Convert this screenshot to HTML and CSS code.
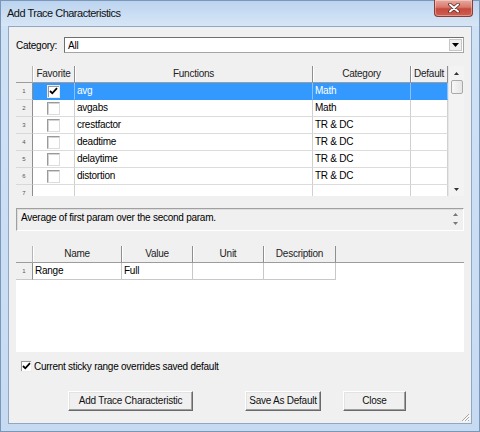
FILE: index.html
```html
<!DOCTYPE html>
<html>
<head>
<meta charset="utf-8">
<link rel="stylesheet" href="styles.css">
</head>
<body>
<div class="window">
  <div class="titlebar">
    <span class="title">Add Trace Characteristics</span>
    <div class="close-btn">
      <svg width="14" height="10" viewBox="0 0 14 10">
        <path d="M3 1.5 L11 8.5 M11 1.5 L3 8.5" stroke="#5a2a26" stroke-width="3.6" stroke-linecap="round"/>
        <path d="M3 1.5 L11 8.5 M11 1.5 L3 8.5" stroke="#ffffff" stroke-width="2" stroke-linecap="round"/>
      </svg>
    </div>
  </div>
  <div class="client">
    <div class="cat-row">
      <span class="cat-label">Category:</span>
      <div class="combo">
        <span class="combo-text">All</span>
        <div class="combo-drop">
          <svg width="7" height="4" viewBox="0 0 7 4"><path d="M0 0 H7 L3.5 4 Z" fill="#000"/></svg>
        </div>
      </div>
    </div>

    <div class="grid1">
      <div class="g1-table">
        <div class="hc rh"></div>
        <div class="hc">Favorite</div>
        <div class="hc">Functions</div>
        <div class="hc">Category</div>
        <div class="hc">Default</div>

        <div class="rhc">1</div>
        <div class="c sel cb-cell"><span class="cb checked"><svg width="9" height="8" viewBox="0 0 9 8"><path d="M1 4 L3.3 6.3 L8 1.2" stroke="#000" stroke-width="1.8" fill="none"/></svg></span></div>
        <div class="c sel">avg</div>
        <div class="c sel">Math</div>
        <div class="c sel"></div>

        <div class="rhc">2</div>
        <div class="c cb-cell"><span class="cb"></span></div>
        <div class="c">avgabs</div>
        <div class="c">Math</div>
        <div class="c"></div>

        <div class="rhc">3</div>
        <div class="c cb-cell"><span class="cb"></span></div>
        <div class="c">crestfactor</div>
        <div class="c">TR &amp; DC</div>
        <div class="c"></div>

        <div class="rhc">4</div>
        <div class="c cb-cell"><span class="cb"></span></div>
        <div class="c">deadtime</div>
        <div class="c">TR &amp; DC</div>
        <div class="c"></div>

        <div class="rhc">5</div>
        <div class="c cb-cell"><span class="cb"></span></div>
        <div class="c">delaytime</div>
        <div class="c">TR &amp; DC</div>
        <div class="c"></div>

        <div class="rhc">6</div>
        <div class="c cb-cell"><span class="cb"></span></div>
        <div class="c">distortion</div>
        <div class="c">TR &amp; DC</div>
        <div class="c"></div>

        <div class="rhc">7</div>
        <div class="c"></div>
        <div class="c"></div>
        <div class="c"></div>
        <div class="c"></div>
      </div>
      <div class="vscroll">
        <svg class="arr" width="5" height="3" viewBox="0 0 5 3"><path d="M0 3 H5 L2.5 0 Z" fill="#333"/></svg>
        <div class="thumb"></div>
        <div class="track"></div>
        <svg class="arr" width="5" height="3" viewBox="0 0 5 3"><path d="M0 0 H5 L2.5 3 Z" fill="#333"/></svg>
      </div>
    </div>

    <div class="desc">
      <span class="desc-text">Average of first param over the second param.</span>
      <div class="desc-scroll">
        <svg width="5" height="3" viewBox="0 0 5 3"><path d="M0 3 H5 L2.5 0 Z" fill="#777"/></svg>
        <svg width="5" height="3" viewBox="0 0 5 3"><path d="M0 0 H5 L2.5 3 Z" fill="#777"/></svg>
      </div>
    </div>

    <div class="grid2">
      <div class="g2-head">
        <div class="hc rh"></div>
        <div class="hc w-name">Name</div>
        <div class="hc w-val">Value</div>
        <div class="hc w-unit">Unit</div>
        <div class="hc w-desc">Description</div>
        <div class="hc fill"></div>
      </div>
      <div class="g2-row">
        <div class="rhc">1</div>
        <div class="c w-name">Range</div>
        <div class="c w-val">Full</div>
        <div class="c w-unit"></div>
        <div class="c w-desc"></div>
      </div>
    </div>

    <div class="sticky">
      <span class="cb small checked"><svg width="9" height="8" viewBox="0 0 9 8"><path d="M1 4 L3.3 6.3 L8 1.2" stroke="#000" stroke-width="1.8" fill="none"/></svg></span>
      <span class="sticky-text">Current sticky range overrides saved default</span>
    </div>

    <div class="buttons">
      <div class="btn b-add">Add Trace Characteristic</div>
      <div class="btn b-save">Save As Default</div>
      <div class="btn b-close">Close</div>
    </div>

    <svg class="grip" width="10" height="10" viewBox="0 0 10 10">
      <path d="M9 2 L2 9 M9 5 L5 9 M9 8 L8 9" stroke="#a9a9a9" stroke-width="1"/>
      <path d="M10 3 L3 10 M10 6 L6 10" stroke="#ffffff" stroke-width="1"/>
    </svg>
  </div>
</div>
</body>
</html>
```

FILE: styles.css
```css
html, body {
  margin: 0;
  padding: 0;
  background: #ffffff;
}

body {
  font-family: "Liberation Sans", Arial, sans-serif;
  font-size: 10px;
  letter-spacing: -0.25px;
  color: #000;
}

.window {
  position: relative;
  width: 480px;
  height: 432px;
  box-sizing: border-box;
  border: 1px solid #7a96b8;
  background: linear-gradient(180deg, #b9d2ee 0px, #cfe1f5 26px, #c6dbf2 100%);
  display: flex;
  flex-direction: column;
}

.titlebar {
  height: 25px;
  display: flex;
  justify-content: space-between;
  align-items: flex-start;
  background: linear-gradient(180deg, #bcd4ef 0%, #d7e6f6 100%);
}

.title {
  margin: 6px 0 0 6px;
  font-size: 11px;
  letter-spacing: -0.5px;
  color: #111;
}

.close-btn {
  width: 39px;
  height: 17px;
  margin: -1px 6px 0 0;
  box-sizing: border-box;
  border: 1px solid #8a3c33;
  border-top: none;
  border-radius: 0 0 4px 4px;
  background: linear-gradient(180deg, #e9a99f 0%, #d9796c 45%, #c54a3e 55%, #cf5f4f 100%);
  display: flex;
  align-items: center;
  justify-content: center;
  box-shadow: inset 0 0 0 1px rgba(255, 255, 255, 0.35);
}

.client {
  position: relative;
  height: 398px;
  margin: 0 7px;
  box-sizing: border-box;
  border: 1px solid #8fa7c5;
  background: #f0f0f0;
  padding: 0 7px;
}

/* Category row */
.cat-row {
  display: flex;
  align-items: center;
  margin-top: 10px;
  height: 16px;
}

.cat-label {
  width: 48px;
}

.combo {
  flex: 1;
  height: 16px;
  box-sizing: border-box;
  background: #fff;
  border: 1px solid #a5a5a5;
  border-top-color: #6f6f6f;
  border-left-color: #6f6f6f;
  display: flex;
  align-items: center;
  justify-content: space-between;
}

.combo-text {
  padding-left: 3px;
}

.combo-drop {
  width: 13px;
  height: 12px;
  margin-right: 1px;
  box-sizing: border-box;
  background: #f0f0f0;
  border: 1px solid #c6c6c6;
  display: flex;
  align-items: center;
  justify-content: center;
}

/* Grid 1 */
.grid1 {
  margin-top: 13px;
  height: 130px;
  display: flex;
  background: #fff;
  overflow: hidden;
}

.g1-table {
  width: 432px;
  display: grid;
  grid-template-columns: 17px 42px 238px 98px 37px;
  grid-auto-rows: 17px;
  align-content: start;
}

.hc {
  box-sizing: border-box;
  background: #f0f0f0;
  border-bottom: 1px solid #9c9c9c;
  border-right: 1px solid #8e8e8e;
  box-shadow: inset 1px 0 0 #ffffff;
  text-align: center;
  line-height: 16px;
  height: 17px;
  color: #222;
  white-space: nowrap;
  overflow: hidden;
}

.hc.rh {
  box-shadow: none;
  border-right-color: #b5b5b5;
}

.rhc {
  box-sizing: border-box;
  background: #f0f0f0;
  border-right: 1px solid #8e8e8e;
  border-bottom: 1px solid #d8d8d8;
  font-size: 6px;
  letter-spacing: 0;
  color: #555;
  text-align: center;
  line-height: 16px;
  height: 17px;
}

.c {
  box-sizing: border-box;
  background: #fff;
  border-right: 1px solid #d0d0d0;
  border-bottom: 1px solid #dcdcdc;
  line-height: 16px;
  height: 17px;
  padding-left: 2px;
  white-space: nowrap;
  overflow: hidden;
}

.c.sel {
  background: #3399ff;
  color: #fff;
  border-right-color: #8cc2f5;
  border-bottom-color: #3399ff;
}

.cb-cell {
  display: flex;
  align-items: center;
  justify-content: center;
  padding-left: 0;
}

.cb {
  width: 13px;
  height: 13px;
  box-sizing: border-box;
  background: #fff;
  border: 1px solid #9a9a9a;
  border-right-color: #dcdcdc;
  border-bottom-color: #dcdcdc;
  box-shadow: inset 1px 1px 0 #d4d4d4;
  display: flex;
  align-items: center;
  justify-content: center;
}

.cb.checked {
  border-color: #ececec;
  box-shadow: inset 1px 1px 0 #9a9a9a;
}

.vscroll {
  width: 16px;
  background: #f3f3f3;
  border-left: 1px solid #e6e6e6;
  box-sizing: border-box;
  display: flex;
  flex-direction: column;
  align-items: center;
}

.vscroll .arr {
  margin: 6px 0 5px;
}

.thumb {
  width: 12px;
  height: 14px;
  box-sizing: border-box;
  border: 1px solid #a9a9a9;
  border-radius: 2px;
  background: linear-gradient(90deg, #f7f7f7, #e6e6e6);
}

.track {
  flex: 1;
}

/* Description box */
.desc {
  margin-top: 12px;
  height: 23px;
  box-sizing: border-box;
  border: 1px solid #a0a0a0;
  border-right-color: #ffffff;
  border-bottom-color: #ffffff;
  box-shadow: inset 1px 1px 0 #dedede;
  background: #f0f0f0;
  display: flex;
  justify-content: space-between;
}

.desc-text {
  padding: 3px 0 0 4px;
  line-height: 12px;
}

.desc-scroll {
  width: 16px;
  display: flex;
  flex-direction: column;
  align-items: center;
  gap: 6px;
  padding-top: 4px;
}

/* Grid 2 */
.grid2 {
  margin-top: 15px;
  height: 106px;
  background: #fff;
}

.g2-head,
.g2-row {
  display: flex;
}

.g2-head .hc.rh,
.g2-row .rhc {
  width: 17px;
}

.w-name { width: 89px; }
.w-val { width: 71px; }
.w-unit { width: 71px; }
.w-desc { width: 72px; }

.g2-head .fill {
  flex: 1;
  border-right: none;
  box-shadow: none;
}

.g2-row .rhc {
  border-bottom-color: #c8c8c8;
}

.g2-row .c {
  border-right-color: #c8c8c8;
  border-bottom-color: #c8c8c8;
}

/* Sticky option */
.sticky {
  margin-top: 7px;
  height: 14px;
  display: flex;
  align-items: center;
  padding-left: 4px;
}

.sticky .cb {
  width: 12px;
  height: 12px;
}

.sticky-text {
  margin-left: 2px;
}

/* Buttons */
.buttons {
  margin-top: 18px;
  display: flex;
  height: 20px;
}

.btn {
  height: 20px;
  box-sizing: border-box;
  background: #f0f0f0;
  border: 1px solid;
  border-color: #ffffff #6a6a6a #6a6a6a #ffffff;
  box-shadow: inset -1px -1px 0 #a0a0a0, inset 1px 1px 0 #e3e3e3;
  text-align: center;
  line-height: 18px;
  color: #111;
}

.b-add { width: 125px; margin-left: 52px; }
.b-save { width: 76px; margin-left: 52px; }
.b-close { width: 63px; margin-left: 22px; }

.grip {
  position: absolute;
  right: 1px;
  bottom: 1px;
}
```
